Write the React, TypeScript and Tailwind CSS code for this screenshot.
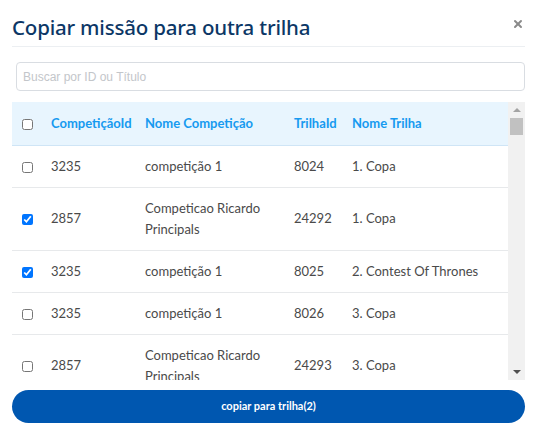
import { X } from 'lucide-react'

const rows = [
  { id: '3235', nome: 'competição 1', trilhaId: '8024', trilha: '1. Copa', checked: false },
  { id: '2857', nome: 'Competicao Ricardo Principals', trilhaId: '24292', trilha: '1. Copa', checked: true },
  { id: '3235', nome: 'competição 1', trilhaId: '8025', trilha: '2. Contest Of Thrones', checked: true },
  { id: '3235', nome: 'competição 1', trilhaId: '8026', trilha: '3. Copa', checked: false },
  { id: '2857', nome: 'Competicao Ricardo Principals', trilhaId: '24293', trilha: '3. Copa', checked: false },
  { id: '3235', nome: 'competição 1', trilhaId: '8027', trilha: '4. Copa', checked: false },
]

export default function App() {
  return (
    <div className="w-[537px] h-[433px] bg-white px-3 pt-[13px] font-['Lato',sans-serif] overflow-hidden">
      {/* Header */}
      <div className="flex items-start justify-between border-b border-[#eceff2] pb-[5px]">
        <h1 className="text-[20.5px] leading-[28px] text-[#0c3766] font-medium font-['Noto_Sans',sans-serif] tracking-[-0.2px]">
          Copiar missão para outra trilha
        </h1>
        <X className="w-3 h-3 mt-[5px] mr-[1px] text-[#8a8a8a]" strokeWidth={4} />
      </div>

      {/* Search */}
      <div className="pl-1 pt-[15px]">
        <input
          className="w-full h-[29px] border border-[#d9dde2] rounded-[4px] px-[6px] text-[12px] font-['Liberation_Sans',sans-serif] placeholder:text-[#c3c6ca] outline-none"
          placeholder="Buscar por ID ou Título"
        />
      </div>

      {/* Table + scrollbar */}
      <div className="mt-[11px] h-[278px] flex">
        <div className="flex-1 overflow-hidden">
          <table className="w-full border-collapse text-[13px]">
            <thead>
              <tr className="bg-[#e8f5fe] border-b border-[#cfe5f6] h-[43px] text-left text-[#169af0]">
                <th className="w-[39px] pl-[10px] font-normal">
                  <input type="checkbox" className="w-[11px] h-[11px] align-middle" />
                </th>
                <th className="w-[94px] font-bold">CompetiçãoId</th>
                <th className="w-[149px] font-bold">Nome Competição</th>
                <th className="w-[58px] font-bold">TrilhaId</th>
                <th className="font-bold">Nome Trilha</th>
              </tr>
            </thead>
            <tbody className="text-[#4a4a4a] leading-[21px]">
              {rows.map((r, i) => (
                <tr key={i} className="border-b border-[#e7e9eb]">
                  <td className="pl-[10px] py-[10px]">
                    <input
                      type="checkbox"
                      defaultChecked={r.checked}
                      className="w-[11px] h-[11px] align-middle"
                    />
                  </td>
                  <td className="py-[10px]">{r.id}</td>
                  <td className="py-[10px] pr-4">{r.nome}</td>
                  <td className="py-[10px]">{r.trilhaId}</td>
                  <td className="py-[10px]">{r.trilha}</td>
                </tr>
              ))}
            </tbody>
          </table>
        </div>
        <div className="w-[17px] bg-[#f1f1f1] flex flex-col items-center">
          <div className="h-[16px] flex items-center justify-center">
            <div className="w-0 h-0 border-x-[4px] border-x-transparent border-b-[4px] border-b-[#a3a3a3]" />
          </div>
          <div className="w-[13px] h-[17px] bg-[#c1c1c1]" />
          <div className="flex-1" />
          <div className="h-[16px] flex items-center justify-center">
            <div className="w-0 h-0 border-x-[4px] border-x-transparent border-t-[4px] border-t-[#505050]" />
          </div>
        </div>
      </div>

      {/* Button */}
      <button className="mt-[10px] w-full h-[33px] rounded-full bg-[#0057b0] text-white text-[11px] font-bold">
        copiar para trilha(2)
      </button>
    </div>
  )
}
